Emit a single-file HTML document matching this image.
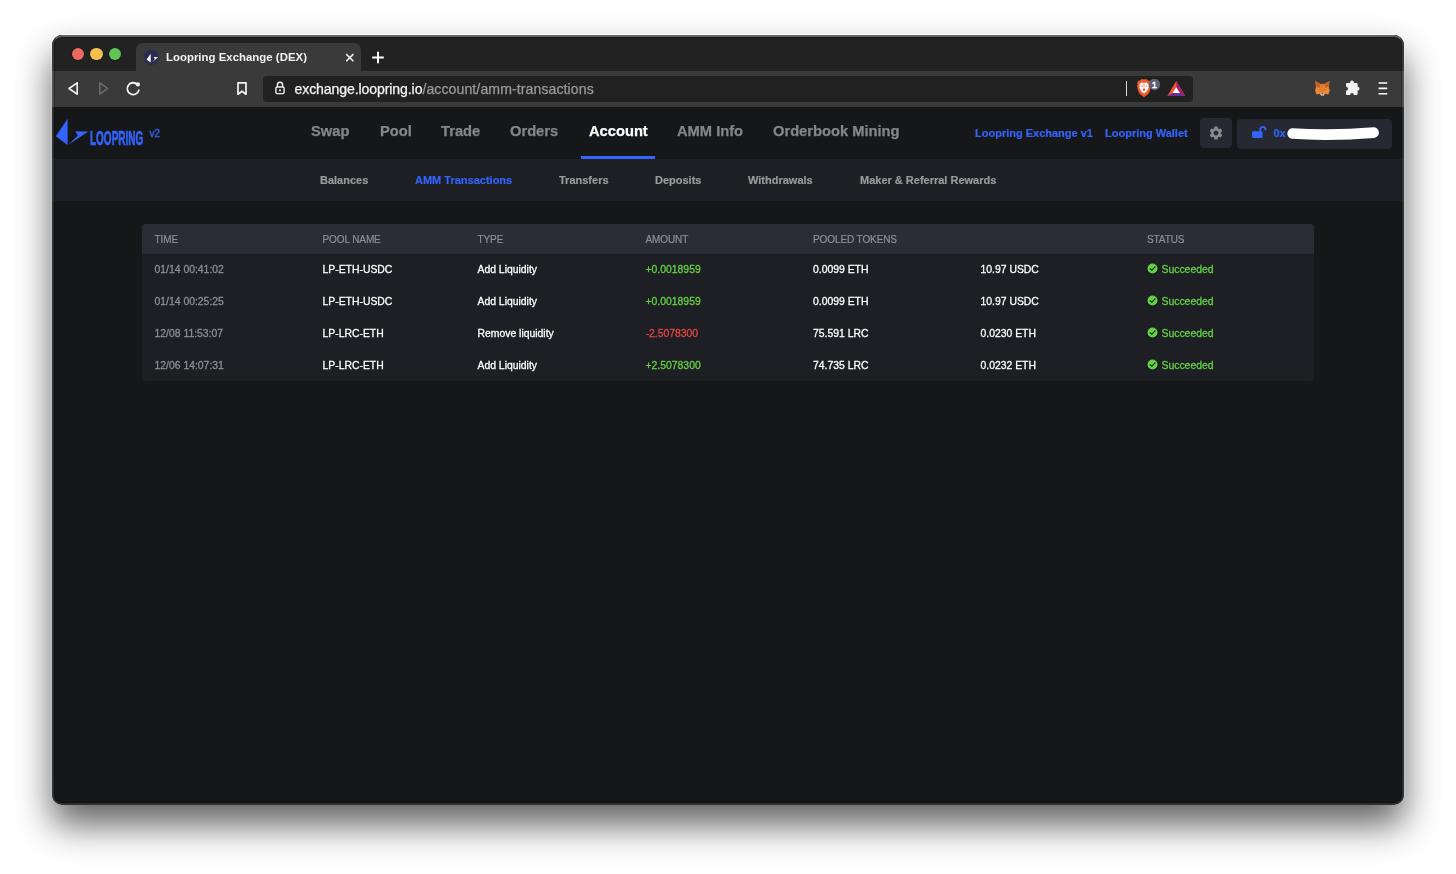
<!DOCTYPE html>
<html lang="en">
<head>
<meta charset="utf-8">
<title>Loopring Exchange (DEX)</title>
<style>
html,body{margin:0;padding:0;}
body{width:1456px;height:874px;background:#fff;overflow:hidden;position:relative;font-family:"Liberation Sans",sans-serif;-webkit-font-smoothing:antialiased;}
.abs{position:absolute;}
#shadow{position:absolute;left:52px;top:35px;width:1352px;height:770px;border-radius:10px;box-shadow:0 20px 36px rgba(0,0,0,.62);}
#win{will-change:transform;position:absolute;left:52px;top:35px;width:1352px;height:770px;border-radius:10px;overflow:hidden;background:#161719;}
#tabstrip{position:absolute;left:0;top:0;width:1352px;height:36px;background:#222222;}
#tab{position:absolute;left:84px;top:8px;width:225px;height:29px;background:#3a3a3a;border-radius:7px 7px 0 0;}
#toolbar{position:absolute;left:0;top:36px;width:1352px;height:36px;background:#3a3a3a;}
#urlbar{position:absolute;left:211px;top:5px;width:930px;height:26px;background:#212121;border-radius:4px;}
.tl{position:absolute;top:13px;width:12.4px;height:12.4px;border-radius:50%;box-shadow:0 0 0 0.6px rgba(0,0,0,.35);}
#tabtitle{position:absolute;left:114px;top:16px;font-size:11.4px;font-weight:bold;color:#f2f2f2;white-space:nowrap;letter-spacing:0.02px;}
#url{position:absolute;left:31.5px;top:5px;-webkit-text-stroke:0.25px;font-size:14.1px;color:#9a9a9a;white-space:nowrap;}
#url b{font-weight:normal;color:#f4f4f4;letter-spacing:-0.11px;}#url i{font-style:normal;letter-spacing:0.09px;}
#header{position:absolute;left:0;top:72px;width:1352px;height:52px;background:#161719;}
#subnav{position:absolute;left:0;top:124px;width:1352px;height:42px;background:#1d1f25;}
.nav{position:absolute;top:16px;font-size:14.7px;font-weight:bold;color:#868686;white-space:nowrap;-webkit-text-stroke:0.25px;}
.nav.on{color:#fff;}
.sn{position:absolute;top:14.6px;font-size:11px;font-weight:bold;color:#9a9a9a;white-space:nowrap;-webkit-text-stroke:0.2px;}
.sn.on{color:#3264fb;}
.lnk{position:absolute;top:19.5px;font-size:11px;font-weight:bold;color:#3264fb;white-space:nowrap;-webkit-text-stroke:0.2px;}
#table{position:absolute;left:90px;top:189px;width:1172px;height:157px;background:#1d1f25;border-radius:3px;overflow:hidden;}
#thead{position:absolute;left:0;top:0;width:1172px;height:30px;background:#2a2d35;}
.th{position:absolute;top:9.7px;font-size:10px;letter-spacing:-0.1px;color:#8f8f93;white-space:nowrap;-webkit-text-stroke:0.2px #8f8f93;}
.td{position:absolute;font-size:10.4px;color:#fff;white-space:nowrap;-webkit-text-stroke:0.28px;}
.c1{left:12.5px}.c2{left:180.5px}.c3{left:335.5px}.c4{left:503.5px}.c5{left:671px}.c6{left:838.5px}.c7{left:1005px}
.r1{top:39.6px}.r2{top:71.6px}.r3{top:103.6px}.r4{top:135.6px}
.st{margin-left:14.5px}.time{color:#8f8f93}.g{color:#63d440}.r{color:#e5443f}
#logotext{position:absolute;left:38px;top:20.3px;font-size:19.4px;line-height:22px;font-weight:bold;color:#3264fb;transform-origin:0 0;transform:scaleX(.515);white-space:nowrap;-webkit-text-stroke:0.7px #3264fb;}
.ck{position:absolute;left:1005px;width:11px;height:11px;}
</style>
</head>
<body>
<div id="shadow"></div>
<div class="abs" style="left:51px;top:34px;width:1354px;height:772px;box-sizing:border-box;border-radius:11px;border:1px solid;border-color:rgba(255,255,255,.95) rgba(255,255,255,.22) rgba(255,255,255,0) rgba(255,255,255,.22)"></div>
<div id="win">
  <div id="tabstrip">
    <div class="tl" style="left:19.6px;background:#ed6a5e"></div>
    <div class="tl" style="left:38.4px;background:#f5bf4f"></div>
    <div class="tl" style="left:57.1px;background:#61c554"></div>
    <div id="tab"></div>
    
    <svg class="abs" style="left:91px;top:15px" width="16" height="16" viewBox="0 0 16 16"><circle cx="8.3" cy="7.5" r="7.4" fill="#2a2b54"/><path d="M7.7 3.7 L7.7 12.5 L3.6 9.5 Z" fill="#fff"/><path d="M10.6 6.9 L15.1 7.3 L9 12.3 L12 9 Z" fill="#fff"/></svg>
    <svg class="abs" style="left:293px;top:18px" width="10" height="10" viewBox="0 0 10 10"><path d="M1.2 1.1 L8.4 8.3 M8.4 1.1 L1.2 8.3" stroke="#f0f0f0" stroke-width="1.5" fill="none"/></svg>
    <svg class="abs" style="left:319px;top:16px" width="14" height="14" viewBox="0 0 14 14"><path d="M7 0.7 V12.3 M1.2 6.5 H12.8" stroke="#fff" stroke-width="2" fill="none"/></svg>
    <div id="tabtitle">Loopring Exchange (DEX)</div>
  </div>
  <div id="toolbar">
    
    <svg class="abs" style="left:14px;top:9px" width="16" height="18" viewBox="0 0 16 18"><path transform="translate(0,-0.6)" d="M11.2 3.4 L11.2 14.8 L3 9.1 Z" stroke="#f4f4f4" stroke-width="1.6" fill="none" stroke-linejoin="round"/></svg>
    <svg class="abs" style="left:44px;top:9px" width="16" height="18" viewBox="0 0 16 18"><path transform="translate(0,-0.6)" d="M3.8 3.5 L3.8 14.7 L11.6 9.1 Z" stroke="#6f6f6f" stroke-width="1.4" fill="none" stroke-linejoin="round"/></svg>
    <svg class="abs" style="left:72px;top:9px" width="18" height="18" viewBox="0 0 18 18"><path transform="translate(0,-0.5)" d="M13.4 5 A5.9 5.9 0 1 0 14.9 10.6" stroke="#f4f4f4" stroke-width="1.8" fill="none" stroke-linecap="round"/><circle cx="13.9" cy="4.4" r="2.1" fill="#f4f4f4"/></svg>
    <svg class="abs" style="left:183px;top:10px" width="14" height="16" viewBox="0 0 14 16"><path d="M3 1.8 H11 V13.2 L7 10.2 L3 13.2 Z" stroke="#f4f4f4" stroke-width="1.7" fill="none" stroke-linejoin="round"/></svg>
    <div id="urlbar">
      
      <svg class="abs" style="left:11px;top:4px" width="12" height="17" viewBox="0 0 12 17"><g transform="translate(0,0.5)"><path d="M3.4 6.4 V4.4 A2.6 2.6 0 0 1 8.6 4.4 V6.4" stroke="#f0f0f0" stroke-width="1.4" fill="none"/><rect x="1.9" y="6.5" width="8.2" height="6.6" rx="1.4" stroke="#f0f0f0" stroke-width="1.4" fill="none"/><circle cx="6" cy="9.8" r="1.1" fill="#f0f0f0"/></g></svg>
      <div class="abs" style="left:863px;top:5px;width:1px;height:15px;background:#d8d8d8"></div>
      <svg class="abs" style="left:873.5px;top:3.3px" width="26" height="20" viewBox="0 0 26 20"><path d="M4.2 0.6 L9.8 0.6 L11.2 2 L12.6 1.8 L13.6 4.2 L13.2 5.2 L13.8 7 L12.6 12 L11 15 L7 17.9 L3 15 L1.4 12 L0.2 7 L0.8 5.2 L0.4 4.2 L1.4 1.8 L2.8 2 Z" fill="#f1592a" stroke="#f1592a" stroke-width="0.5" stroke-linejoin="round"/><path d="M4.2 3.6 L5.6 4 L7 3.6 L8.4 4 L9.8 3.6 L11.8 6 L11.4 7.6 L11.6 9 L9.6 12.6 L7 14.6 L4.4 12.6 L2.4 9 L2.6 7.6 L2.2 6 Z" fill="#fff"/><path d="M6.1 9.6 L7.9 9.6 L8.3 11 L7 12.3 L5.7 11 Z M3.5 6.5 L5.8 7.1 L5 8.1 Z M10.5 6.5 L8.2 7.1 L9 8.1 Z M6.6 4.4 L7.4 4.4 L7.3 8.6 L6.7 8.6 Z" fill="#f1592a"/><circle cx="17.5" cy="5.5" r="5.7" fill="#5f6275"/><text x="17.5" y="8.8" style="font:9.6px 'Liberation Sans',sans-serif" fill="#fff" stroke="#fff" stroke-width="0.45" text-anchor="middle">1</text></svg>
      <svg class="abs" style="left:904px;top:4px" width="19" height="17" viewBox="0 0 19 17"><path d="M9.3 0.9 L18.2 16 L0.4 16 Z" fill="#f4562f"/><path d="M9.3 0.9 L18.2 16 L9.3 11 Z" fill="#a0216a"/><path d="M0.4 16 L18.2 16 L9.3 11 Z" fill="#6a2c9a"/><path d="M9.3 7.3 L12.9 13 L5.7 13 Z" fill="#fff"/></svg>
      <div id="url"><b>exchange.loopring.io</b><i>/account/amm-transactions</i></div>
    </div>

    <svg class="abs" style="left:1263.2px;top:10.2px" width="15" height="15" viewBox="0 0 15 15"><path d="M0.4 0.4 L5.6 3.2 L9.2 3.2 L14.4 0.4 L13.5 5.8 L14.5 9.6 L13.3 13.3 L9.6 12.5 L8.8 14.3 L6 14.3 L5.2 12.5 L1.5 13.3 L0.3 9.6 L1.3 5.8 Z" fill="#f0883a" stroke="#f0883a" stroke-width="0.4" stroke-linejoin="round"/><path d="M0.4 0.4 L5.6 3.2 L4.6 7 L1.3 5.8 Z M14.4 0.4 L9.2 3.2 L10.2 7 L13.5 5.8 Z" fill="#c4642a"/><path d="M5.6 3.2 L9.2 3.2 L10.2 7 L9.4 10.8 L5.4 10.8 L4.6 7 Z" fill="#e87b2c"/><path d="M5.2 12.3 L9.6 12.3 L8.8 14.4 L6 14.4 Z" fill="#d9cbbf"/><path d="M6.5 12.2 L8.3 12.2 L7.9 13.2 L6.9 13.2 Z" fill="#2b2420"/><path d="M3.6 8.2 L5.2 8.6 L4.8 9.6 Z M11.2 8.2 L9.6 8.6 L10 9.6 Z" fill="#c4642a"/></svg>
    <svg class="abs" style="left:1292px;top:9px" width="17" height="17" viewBox="0 0 17 17"><path d="M6.2 3 A1.9 1.9 0 1 1 9.8 3 L12.6 3 Q13.6 3 13.6 4 L13.6 6.8 A1.9 1.9 0 1 1 13.6 10.6 L13.6 14 Q13.6 15 12.6 15 L9.9 15 A1.9 1.9 0 1 0 6.1 15 L3 15 Q2 15 2 14 L2 10.7 A1.9 1.9 0 1 0 2 6.7 L2 4 Q2 3 3 3 Z" fill="#f1f1f1"/></svg>
    <svg class="abs" style="left:1324px;top:8px" width="14" height="20" viewBox="0 0 14 20"><path d="M2.6 4 H11.2 M2.6 9.4 H11.2 M2.6 14.7 H11.2" stroke="#fff" stroke-width="1.6" fill="none"/></svg>
  </div>
  <div id="header">
    <svg class="abs" style="left:0;top:8px" width="44" height="34" viewBox="0 0 44 34"><path d="M15.6 3.7 L15.6 30 L3.8 21.2 Z" fill="#3264fb"/><path d="M23.1 16.2 L36.5 16.4 L16.3 29.8 L25.9 20.4 Z" fill="#3264fb"/></svg>
    <div id="logotext">LOOPRING</div>
    <div class="abs" style="left:97.5px;top:20.5px;font-size:10px;color:#3264fb;-webkit-text-stroke:0.3px #3264fb">v2</div>
    <div class="abs" style="left:529px;top:49px;width:74px;height:3px;background:#3264fb"></div>
    <div class="abs" style="left:1148px;top:11px;width:32px;height:30px;background:#262931;border-radius:4px"></div>
    <svg class="abs" style="left:1156px;top:18px" width="16" height="16" viewBox="0 0 24 24"><path fill="#8b8b90" d="M19.14 12.94c.04-.3.06-.61.06-.94 0-.32-.02-.64-.07-.94l2.03-1.58a.49.49 0 0 0 .12-.61l-1.92-3.32a.488.488 0 0 0-.59-.22l-2.39.96c-.5-.38-1.03-.7-1.62-.94l-.36-2.54a.484.484 0 0 0-.48-.41h-3.84c-.24 0-.43.17-.47.41l-.36 2.54c-.59.24-1.13.57-1.62.94l-2.39-.96c-.22-.08-.47 0-.59.22L2.74 8.87c-.12.21-.08.47.12.61l2.03 1.58c-.05.3-.09.63-.09.94s.02.64.07.94l-2.03 1.58a.49.49 0 0 0-.12.61l1.92 3.32c.12.22.37.29.59.22l2.39-.96c.5.38 1.03.7 1.62.94l.36 2.54c.05.24.24.41.48.41h3.84c.24 0 .44-.17.47-.41l.36-2.54c.59-.24 1.13-.56 1.62-.94l2.39.96c.22.08.47 0 .59-.22l1.92-3.32c.12-.22.07-.47-.12-.61l-2.01-1.58zM12 15.6c-1.98 0-3.600-1.620-3.600-3.600s1.620-3.600 3.600-3.600 3.600 1.620 3.600 3.600-1.620 3.600-3.600 3.600z"/></svg>
    <div class="abs" style="left:1185px;top:12px;width:155px;height:30px;background:#262931;border-radius:4px"></div>
    <svg class="abs" style="left:1199px;top:17px" width="16" height="15" viewBox="0 0 16 15"><path d="M9.3 7.6 V5.4 A2.55 2.55 0 0 1 14.4 5.4 V6.2" stroke="#3264fb" stroke-width="1.9" fill="none"/><rect x="1" y="7.3" width="10.6" height="6.6" rx="1.2" fill="#3264fb"/></svg>
    <div class="lnk" style="left:1221.5px;top:20px">0x</div>
    <svg class="abs" style="left:1230px;top:14px" width="104" height="24" viewBox="0 0 104 24"><path d="M10.6 12.5 Q50 15.2 91.6 11.6" stroke="#fff" stroke-width="10.6" stroke-linecap="round" fill="none"/></svg>
    <div class="nav" style="left:259px">Swap</div>
    <div class="nav" style="left:328px">Pool</div>
    <div class="nav" style="left:389px">Trade</div>
    <div class="nav" style="left:458px">Orders</div>
    <div class="nav on" style="left:537px">Account</div>
    <div class="nav" style="left:625px">AMM Info</div>
    <div class="nav" style="left:721px">Orderbook Mining</div>
    <div class="lnk" style="left:923px">Loopring Exchange v1</div>
    <div class="lnk" style="left:1053px">Loopring Wallet</div>
  </div>
  <div id="subnav">
    <div class="sn" style="left:268px">Balances</div>
    <div class="sn on" style="left:363px">AMM Transactions</div>
    <div class="sn" style="left:507px">Transfers</div>
    <div class="sn" style="left:603px">Deposits</div>
    <div class="sn" style="left:696px">Withdrawals</div>
    <div class="sn" style="left:808px">Maker &amp; Referral Rewards</div>
  </div>
  <div id="table">
    <div id="thead">
      <div class="th c1">TIME</div><div class="th c2">POOL NAME</div><div class="th c3">TYPE</div><div class="th c4">AMOUNT</div><div class="th c5">POOLED TOKENS</div><div class="th c7">STATUS</div>
    </div>
    <svg class="ck" style="top:39px" viewBox="0 0 12 12"><circle cx="6" cy="6" r="5.4" fill="#63d440"/><path d="M3.4 6.2 L5.3 8 L8.7 4.3" stroke="#1d1f25" stroke-width="1.25" fill="none" stroke-linecap="round" stroke-linejoin="round"/></svg>
    <svg class="ck" style="top:71px" viewBox="0 0 12 12"><circle cx="6" cy="6" r="5.4" fill="#63d440"/><path d="M3.4 6.2 L5.3 8 L8.7 4.3" stroke="#1d1f25" stroke-width="1.25" fill="none" stroke-linecap="round" stroke-linejoin="round"/></svg>
    <svg class="ck" style="top:103px" viewBox="0 0 12 12"><circle cx="6" cy="6" r="5.4" fill="#63d440"/><path d="M3.4 6.2 L5.3 8 L8.7 4.3" stroke="#1d1f25" stroke-width="1.25" fill="none" stroke-linecap="round" stroke-linejoin="round"/></svg>
    <svg class="ck" style="top:135px" viewBox="0 0 12 12"><circle cx="6" cy="6" r="5.4" fill="#63d440"/><path d="M3.4 6.2 L5.3 8 L8.7 4.3" stroke="#1d1f25" stroke-width="1.25" fill="none" stroke-linecap="round" stroke-linejoin="round"/></svg>
    <div class="td time c1 r1">01/14 00:41:02</div><div class="td c2 r1">LP-ETH-USDC</div><div class="td c3 r1">Add Liquidity</div><div class="td g c4 r1">+0.0018959</div><div class="td c5 r1">0.0099 ETH</div><div class="td c6 r1">10.97 USDC</div><div class="td g c7 st r1">Succeeded</div>
    <div class="td time c1 r2">01/14 00:25:25</div><div class="td c2 r2">LP-ETH-USDC</div><div class="td c3 r2">Add Liquidity</div><div class="td g c4 r2">+0.0018959</div><div class="td c5 r2">0.0099 ETH</div><div class="td c6 r2">10.97 USDC</div><div class="td g c7 st r2">Succeeded</div>
    <div class="td time c1 r3">12/08 11:53:07</div><div class="td c2 r3">LP-LRC-ETH</div><div class="td c3 r3">Remove liquidity</div><div class="td r c4 r3">-2.5078300</div><div class="td c5 r3">75.591 LRC</div><div class="td c6 r3">0.0230 ETH</div><div class="td g c7 st r3">Succeeded</div>
    <div class="td time c1 r4">12/06 14:07:31</div><div class="td c2 r4">LP-LRC-ETH</div><div class="td c3 r4">Add Liquidity</div><div class="td g c4 r4">+2.5078300</div><div class="td c5 r4">74.735 LRC</div><div class="td c6 r4">0.0232 ETH</div><div class="td g c7 st r4">Succeeded</div>
  </div>
  <div class="abs" style="left:0;top:0;width:1352px;height:770px;border-radius:10px;box-sizing:border-box;border:2px solid rgba(255,255,255,.11);border-top:2px solid rgba(255,255,255,.3);box-shadow:inset 0 0 0 1px rgba(0,0,0,.3);pointer-events:none"></div>
</div>
</body>
</html>
